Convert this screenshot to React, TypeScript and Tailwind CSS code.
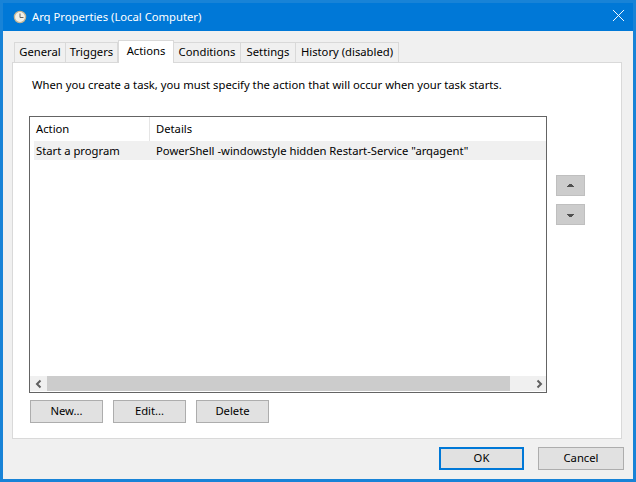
import { X } from 'lucide-react'

const TABS = [
  { label: 'General', width: 'w-[52px]' },
  { label: 'Triggers', width: 'w-[52px]' },
  { label: 'Actions', width: 'w-[56px]', active: true },
  { label: 'Conditions', width: 'w-[67px]' },
  { label: 'Settings', width: 'w-[55px]' },
  { label: 'History (disabled)', width: 'w-[103px]' },
]

function ClockIcon() {
  return (
    <svg width="14" height="14" viewBox="0 0 14 14" className="shrink-0">
      <circle cx="7" cy="7" r="5.6" fill="#f2f0e8" stroke="#c4b594" strokeWidth="1.3" />
      <path d="M7 3.5V7.5H10.5" fill="none" stroke="#666" strokeWidth="1" />
    </svg>
  )
}

function Arrow({ dir }: { dir: 'up' | 'down' }) {
  return (
    <svg width="7" height="3" viewBox="0 0 7 3" shapeRendering="crispEdges" className={dir === 'up' ? 'mb-px' : 'mt-px'}>
      <path d={dir === 'up' ? 'M2 0H5V1H6V2H7V3H0V2H1V1H2Z' : 'M0 0H7V1H6V2H5V3H2V2H1V1H0Z'} fill="#505050" />
    </svg>
  )
}

function Chevron({ dir }: { dir: 'left' | 'right' }) {
  return (
    <svg width="8" height="10" viewBox="0 0 8 10">
      <path d={dir === 'left' ? 'M5.5 1.5L2 5L5.5 8.5' : 'M2.5 1.5L6 5L2.5 8.5'} fill="none" stroke="#606060" strokeWidth="2" />
    </svg>
  )
}

function ActionButton({ label }: { label: string }) {
  return (
    <button className="w-[73px] h-[23px] bg-[#e1e1e1] border border-[#adadad] leading-none text-black pb-px">
      {label}
    </button>
  )
}

function MoveButton({ dir }: { dir: 'up' | 'down' }) {
  return (
    <button className="w-[29px] h-[21px] bg-[#cccccc] border border-[#bfbfbf] flex items-center justify-center">
      <Arrow dir={dir} />
    </button>
  )
}

export default function App() {
  return (
    <div
      className="w-[636px] h-[482px] flex flex-col bg-[#f0f0f0] border-x-[3px] border-b-[3px] border-[#1883d7] text-[11.25px] text-black overflow-hidden"
      style={{ fontFamily: '"Noto Sans", "Open Sans", sans-serif' }}
    >
      <div className="h-[31px] shrink-0 bg-[#0078d7] border-t-[3px] border-[#1883d7] flex items-center pl-[10px] pr-[4px] text-white">
        <ClockIcon />
        <span className="ml-[5px]">Arq Properties (Local Computer)</span>
        <X size={21} strokeWidth={1.1} className="ml-auto mb-[4px] text-white" />
      </div>

      <div className="flex-1 flex flex-col pt-[9px] pl-[9px] pr-[11px]">
        <div className="flex items-end h-[22px] pl-[2px] relative z-10">
          {TABS.map(tab => (
            <div
              key={tab.label}
              className={
                tab.active
                  ? `${tab.width} h-[23px] -mb-px shrink-0 bg-white border border-b-0 border-[#d9d9d9] flex items-start pt-[2px] justify-center`
                  : `${tab.width} h-[20px] shrink-0 bg-[#f0f0f0] border-t border-r border-[#d9d9d9] first:border-l flex items-center justify-center`
              }
            >
              {tab.label}
            </div>
          ))}
        </div>

        <div className="h-[377px] bg-white border border-[#d9d9d9] flex flex-col pl-[16px] pt-[13px]">
          <p className="pl-[3px] leading-[18px]">
            When you create a task, you must specify the action that will occur when your task starts.
          </p>

          <div className="flex mt-[22px]">
            <div className="w-[518px] h-[277px] border border-[#646464] flex flex-col pl-[4px] pr-0">
              <div className="flex h-[24px] items-center shrink-0">
                <div className="w-[116px] h-full flex items-center pl-[2px] border-r border-[#e5e5e5]">Action</div>
                <div className="pl-[6px]">Details</div>
              </div>
              <div className="flex h-[19px] items-center bg-[#f0f0f0] shrink-0 pt-px">
                <div className="w-[116px] pl-[2px]">Start a program</div>
                <div className="pl-[6px]">PowerShell -windowstyle hidden Restart-Service "arqagent"</div>
              </div>
              <div className="flex-1" />
              <div className="flex h-[15px] mb-px -ml-[4px] bg-[#f0f0f0] pl-px">
                <div className="w-[16px] flex items-center justify-center">
                  <Chevron dir="left" />
                </div>
                <div className="w-[463px] bg-[#cccccc]" />
                <div className="flex-1 flex items-center justify-end pr-[3px]">
                  <Chevron dir="right" />
                </div>
              </div>
            </div>

            <div className="flex flex-col gap-[8px] ml-[9px] mt-[59px]">
              <MoveButton dir="up" />
              <MoveButton dir="down" />
            </div>
          </div>

          <div className="flex gap-[10px] mt-[7px] pl-px">
            <ActionButton label="New..." />
            <ActionButton label="Edit..." />
            <ActionButton label="Delete" />
          </div>
        </div>

        <div className="flex justify-end gap-[14px] mt-[8px] -mr-[2px]">
          <button className="w-[85px] h-[23px] bg-[#e1e1e1] border-2 border-[#0078d7]">OK</button>
          <button className="w-[86px] h-[23px] bg-[#e1e1e1] border border-[#adadad]">Cancel</button>
        </div>
      </div>
    </div>
  )
}
